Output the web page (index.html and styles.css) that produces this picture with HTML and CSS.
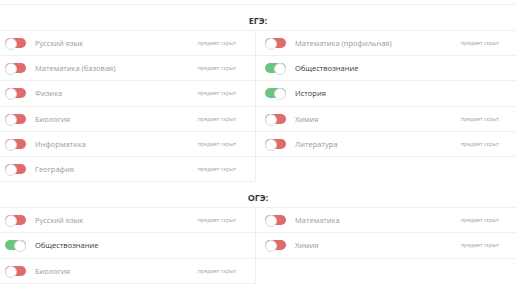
FILE: index.html
```html
<!DOCTYPE html>
<html lang="ru">
<head>
    <meta charset="UTF-8">
    <meta name="viewport" content="width=device-width, initial-scale=1.0">
    <title>Предметы</title>
    <link rel="stylesheet" href="styles.css">
</head>
<body>
    <div class="top-line"></div>

    <section class="exam">
        <h2 class="exam-title">ЕГЭ:</h2>
        <div class="subjects">
            <div class="subject off"><span class="toggle"></span><span class="name">Русский язык</span><span class="note">предмет скрыт</span></div>
            <div class="subject off"><span class="toggle"></span><span class="name">Математика (профильная)</span><span class="note">предмет скрыт</span></div>
            <div class="subject off"><span class="toggle"></span><span class="name">Математика (базовая)</span><span class="note">предмет скрыт</span></div>
            <div class="subject on"><span class="toggle"></span><span class="name">Обществознание</span></div>
            <div class="subject off"><span class="toggle"></span><span class="name">Физика</span><span class="note">предмет скрыт</span></div>
            <div class="subject on"><span class="toggle"></span><span class="name">История</span></div>
            <div class="subject off"><span class="toggle"></span><span class="name">Биология</span><span class="note">предмет скрыт</span></div>
            <div class="subject off"><span class="toggle"></span><span class="name">Химия</span><span class="note">предмет скрыт</span></div>
            <div class="subject off"><span class="toggle"></span><span class="name">Информатика</span><span class="note">предмет скрыт</span></div>
            <div class="subject off"><span class="toggle"></span><span class="name">Литература</span><span class="note">предмет скрыт</span></div>
            <div class="subject off"><span class="toggle"></span><span class="name">География</span><span class="note">предмет скрыт</span></div>
        </div>
    </section>

    <section class="exam">
        <h2 class="exam-title">ОГЭ:</h2>
        <div class="subjects">
            <div class="subject off"><span class="toggle"></span><span class="name">Русский язык</span><span class="note">предмет скрыт</span></div>
            <div class="subject off"><span class="toggle"></span><span class="name">Математика</span><span class="note">предмет скрыт</span></div>
            <div class="subject on"><span class="toggle"></span><span class="name">Обществознание</span></div>
            <div class="subject off"><span class="toggle"></span><span class="name">Химия</span><span class="note">предмет скрыт</span></div>
            <div class="subject off"><span class="toggle"></span><span class="name">Биология</span><span class="note">предмет скрыт</span></div>
        </div>
    </section>
</body>
</html>
```

FILE: styles.css
```css
:root {
    --border-color: #f0f0f0;
    --off-color: #e06b6b;
    --on-color: #6cc481;
    --muted-text: #9b9b9b;
    --main-text: #3a3a3a;
}

* {
    margin: 0;
    padding: 0;
    box-sizing: border-box;
}

body {
    font-family: 'Open Sans', 'Noto Sans', sans-serif;
    background-color: #ffffff;
    color: var(--main-text);
    width: 516px;
}

.top-line {
    height: 5px;
    border-bottom: 1px solid var(--border-color);
}

.exam-title {
    font-size: 9px;
    font-weight: 700;
    text-align: center;
    color: #333;
    padding: 10px 0 4px;
    line-height: 11px;
    border-bottom: 1px solid var(--border-color);
}

.subjects {
    display: grid;
    grid-template-columns: 256px 1fr;
}

.subject {
    display: flex;
    align-items: center;
    height: 25.2px;
    padding: 0 19px 0 5px;
    border-bottom: 1px solid var(--border-color);
}

.subject:nth-child(odd) {
    border-right: 1px solid var(--border-color);
}

.subjects .subject:nth-child(even) {
    padding-left: 9px;
    padding-right: 17px;
}

.toggle {
    position: relative;
    width: 21px;
    height: 10px;
    border-radius: 5px;
    flex-shrink: 0;
}

.toggle::after {
    content: "";
    position: absolute;
    top: 0;
    width: 10px;
    height: 10px;
    border-radius: 50%;
    background-color: #fff;
    border: 1px solid #dcdcdc;
}

.off .toggle {
    background-color: var(--off-color);
}

.off .toggle::after {
    left: 0;
}

.on .toggle {
    background-color: var(--on-color);
}

.on .toggle::after {
    right: 0;
}

.name {
    margin-left: 9px;
    font-size: 7.5px;
    flex: 1;
}

.off .name {
    color: var(--muted-text);
}

.on .name {
    color: var(--main-text);
}

.note {
    font-size: 5.3px;
    color: #a0a0a0;
}
```
